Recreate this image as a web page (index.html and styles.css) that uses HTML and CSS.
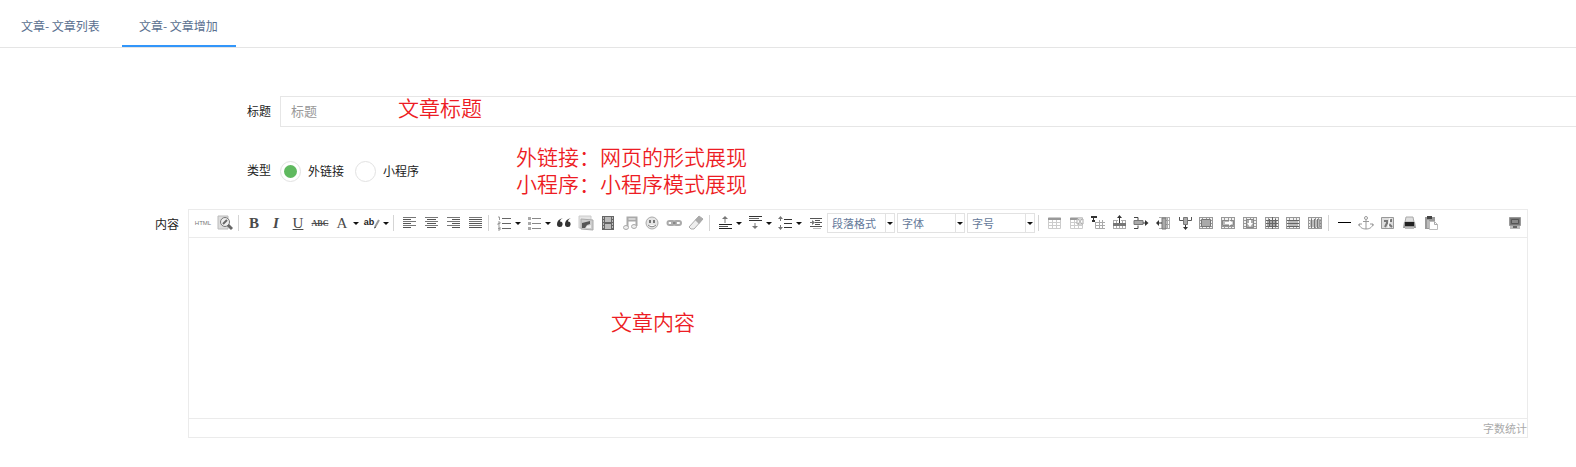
FILE: index.html
```html
<!DOCTYPE html>
<html lang="zh-CN">
<head>
    <meta charset="UTF-8">
    <title>文章增加</title>
    <link rel="stylesheet" href="styles.css">
</head>
<body>
    <!-- Shared icon shapes -->
    <svg class="defs" aria-hidden="true">
        <symbol id="grid" viewBox="0 0 16 16">
            <path d="M1 2h14v12H1z" fill="#f2f2f2"/>
            <path d="M1 2.5h14M1 5.5h14M1 8.5h14M1 11.5h14M1 13.5h14M1.5 2v12M4.5 2v12M8.5 2v12M11.5 2v12M14.5 2v12" stroke="#999" fill="none"/>
        </symbol>
        <symbol id="caret" viewBox="0 0 8 16">
            <path d="M1 7h6L4 10z" fill="#111"/>
        </symbol>
    </svg>

    <!-- Tabs -->
    <nav class="tabs">
        <a class="tab" href="#list">文章- 文章列表</a>
        <a class="tab active" href="#add">文章- 文章增加</a>
    </nav>

    <form class="form">
        <!-- Title -->
        <div class="row">
            <label class="label" for="title">标题</label>
            <input class="input" type="text" id="title" placeholder="标题">
            <span class="note note-title">文章标题</span>
        </div>

        <!-- Type -->
        <div class="row row-type">
            <span class="label" id="typeLabel">类型</span>
            <div class="radios" role="radiogroup" aria-labelledby="typeLabel">
                <label class="radio"><input type="radio" name="type" checked>外链接</label>
                <label class="radio"><input type="radio" name="type">小程序</label>
            </div>
            <span class="note note-type">外链接：网页的形式展现<br>小程序：小程序模式展现</span>
        </div>

        <!-- Content -->
        <div class="row row-content">
            <label class="label label-content" for="content">内容</label>
            <div class="editor">
                <div class="toolbar">
                    <button type="button" class="btn html">HTML</button>
                    <button type="button" class="btn" aria-label="预览"><svg viewBox="0 0 16 16"><path d="M1 1h10v13H1z" fill="#ddd" stroke="#bbb"/><circle cx="8" cy="7" r="4.5" fill="#eee" stroke="#777"/><path d="M6 9l4-4" stroke="#666" stroke-width="2"/><path d="M11 10l4 4" stroke="#666" stroke-width="3"/></svg></button>
                    <span class="sep"></span>
                    <button type="button" class="btn serif bold">B</button>
                    <button type="button" class="btn serif bold italic">I</button>
                    <button type="button" class="btn serif under">U</button>
                    <button type="button" class="btn strike">ABC</button>
                    <button type="button" class="btn drop serif"><span class="face">A</span><svg class="caret"><use href="#caret"/></svg></button>
                    <button type="button" class="btn drop pen"><span class="face">ab<svg class="nib" viewBox="0 0 6 12"><path d="M1 10L5 3" stroke="#999" stroke-width="2"/><path d="M0 11l2-1" stroke="#444"/></svg></span><svg class="caret"><use href="#caret"/></svg></button>
                    <span class="sep"></span>
                    <button type="button" class="btn" aria-label="居左对齐"><svg viewBox="0 0 16 16"><path d="M2 2.5h13M2 6.5h13M2 10.5h13" stroke="#777"/><path d="M2 4.5h8M2 8.5h8M2 12.5h8" stroke="#555"/></svg></button>
                    <button type="button" class="btn" aria-label="居中对齐"><svg viewBox="0 0 16 16"><path d="M2 2.5h13M2 6.5h13M2 10.5h13" stroke="#777"/><path d="M4 4.5h9M4 8.5h9M4 12.5h9" stroke="#555"/></svg></button>
                    <button type="button" class="btn" aria-label="居右对齐"><svg viewBox="0 0 16 16"><path d="M2 2.5h13M2 6.5h13M2 10.5h13" stroke="#777"/><path d="M7 4.5h8M7 8.5h8M7 12.5h8" stroke="#555"/></svg></button>
                    <button type="button" class="btn" aria-label="两端对齐"><svg viewBox="0 0 16 16"><path d="M2 2.5h13M2 6.5h13M2 10.5h13" stroke="#777"/><path d="M2 4.5h13M2 8.5h13M2 12.5h13" stroke="#555"/></svg></button>
                    <span class="sep"></span>
                    <button type="button" class="btn drop" aria-label="有序列表"><svg viewBox="0 0 16 16"><path d="M6 3.5h9M6 8.5h9M6 13.5h9" stroke="#666"/><path d="M2 2h1.500v3M2 7h2v1.500H2V10h2M2 12h2v3H2M2 13.500h2" stroke="#999" fill="none"/></svg><svg class="caret"><use href="#caret"/></svg></button>
                    <button type="button" class="btn drop" aria-label="无序列表"><svg viewBox="0 0 16 16"><path d="M6 3.5h9M6 8.5h9M6 13.5h9" stroke="#888"/><path d="M2 2h3v3H2zM2 7h3v3H2zM2 12h3v3H2z" fill="#aaa"/></svg><svg class="caret"><use href="#caret"/></svg></button>
                    <button type="button" class="btn" aria-label="引用"><svg viewBox="0 0 16 16"><path d="M7 3C3 4 1 6 1 9a2.800 2.800 0 1 0 3-2.600C4 5 5 4 7 3zM15 3c-4 1-6 3-6 6a2.800 2.800 0 1 0 3-2.600C12 5 13 4 15 3z" fill="#333"/></svg></button>
                    <button type="button" class="btn" aria-label="图片"><svg viewBox="0 0 16 16"><path d="M1 1h12v12H1z" fill="#e5e5e5" stroke="#ccc"/><path d="M3 4l12 1v10L3 14z" fill="#ccc" stroke="#aaa"/><path d="M4 8l8-2v3l-3 1-2 3H4z" fill="#555"/><path d="M9 11l4-1v3H8z" fill="#eee"/></svg></button>
                    <button type="button" class="btn" aria-label="视频"><svg viewBox="0 0 16 16"><path d="M2 1h12v14H2z" fill="#666"/><path d="M5 2h6v5H5zM5 9h6v5H5z" fill="#bbb"/><path d="M3.500 2v12M12.500 2v12" stroke="#bbb" stroke-dasharray="2 1"/></svg></button>
                    <button type="button" class="btn" aria-label="音乐"><svg viewBox="0 0 16 16" fill="none" stroke="#aaa"><path d="M5.500 12V2.500h9V11M5.500 5.500h9" stroke-width="2"/><ellipse cx="4" cy="12.500" rx="2.500" ry="2" fill="#eee"/><ellipse cx="12" cy="11.500" rx="2.500" ry="2" fill="#eee"/></svg></button>
                    <button type="button" class="btn" aria-label="表情"><svg viewBox="0 0 16 16"><circle cx="8" cy="8" r="6" fill="#e5e5e5" stroke="#aaa"/><path d="M6 5v3M10 5v3" stroke="#777" stroke-width="2"/><path d="M4 10q4 3.500 8 0" fill="#fff" stroke="#888"/></svg></button>
                    <button type="button" class="btn" aria-label="超链接"><svg viewBox="0 0 16 16" fill="none" stroke="#aaa" stroke-width="2"><rect x="1.500" y="6" width="7" height="4" rx="2"/><rect x="8" y="6" width="7" height="4" rx="2"/><path d="M5 8h6" stroke="#666" stroke-width="1"/></svg></button>
                    <button type="button" class="btn" aria-label="清除格式"><svg viewBox="0 0 16 16"><path d="M1 12l10-11 4 3-9 10H3z" fill="#eee" stroke="#aaa"/><path d="M7 5l4-4 4 3-4 5z" fill="#aaa"/></svg></button>
                    <span class="sep"></span>
                    <button type="button" class="btn drop" aria-label="段前距"><svg viewBox="0 0 16 16"><path d="M2 9.500h13M2 13.500h13" stroke="#222"/><path d="M2 11.500h9" stroke="#555"/><path d="M8 8V3" stroke="#777"/><path d="M5 4l3-3 3 3z" fill="#777"/></svg><svg class="caret"><use href="#caret"/></svg></button>
                    <button type="button" class="btn drop" aria-label="段后距"><svg viewBox="0 0 16 16"><path d="M2 1.500h13M2 5.500h13" stroke="#333"/><path d="M2 3.500h10" stroke="#666"/><path d="M8 8v5" stroke="#777"/><path d="M5 11l3 3 3-3z" fill="#777"/></svg><svg class="caret"><use href="#caret"/></svg></button>
                    <button type="button" class="btn drop" aria-label="行间距"><svg viewBox="0 0 16 16"><path d="M7 4.500h8M7 8.500h8M7 12.500h8" stroke="#333"/><path d="M3.500 2v4M3.500 10v4" stroke="#777"/><path d="M1 4l2.500-3L6 4zM1 12l2.500 3L6 12z" fill="#777"/></svg><svg class="caret"><use href="#caret"/></svg></button>
                    <button type="button" class="btn" aria-label="首行缩进"><svg viewBox="0 0 16 16"><path d="M3 3.500h12M8 5.500h5M8 7.500h7M8 9.500h5M3 11.500h12" stroke="#555"/><path d="M3 7h2V5l3 2.500L5 10V8H3z" fill="#777"/><path d="M6 13.500h8" stroke="#bbb"/></svg></button>
                    <span class="combo"><select aria-label="段落格式"><option>段落格式</option></select><svg class="caret"><use href="#caret"/></svg></span>
                    <span class="combo"><select aria-label="字体"><option>字体</option></select><svg class="caret"><use href="#caret"/></svg></span>
                    <span class="combo"><select aria-label="字号"><option>字号</option></select><svg class="caret"><use href="#caret"/></svg></span>
                    <span class="sep"></span>
                    <div class="tables">
                        <button type="button" class="btn" aria-label="插入表格"><svg viewBox="0 0 16 16"><path d="M2.500 2.500h12v11h-12zM2.500 7.500h12M2.500 10.500h12M6.500 4v9M10.500 4v9" fill="none" stroke="#ccc"/><path d="M2 3h13v2H2z" fill="#999"/></svg></button>
                        <button type="button" class="btn" aria-label="删除表格"><svg viewBox="0 0 16 16"><path d="M2.500 2.500h12v11h-12zM2.500 7.500h12M2.500 10.500h12M6.500 4v9M10.500 4v9" fill="none" stroke="#ccc"/><path d="M2 3h8v2H2z" fill="#999"/><path d="M9 4h6v5H9z" fill="#fff" stroke="#aaa"/><path d="M10 4l4 5M14 4l-4 5" stroke="#aaa"/></svg></button>
                        <button type="button" class="btn" aria-label="表格前插入段落"><svg viewBox="0 0 16 16"><path d="M1 2h6M2 6h3" stroke="#333" stroke-width="2"/><path d="M3.500 2v4" stroke="#333"/><path d="M5.500 7v6.500H15M5.500 7.500H15M5.500 10.500H15M9.500 5v9M12.500 5v9" fill="none" stroke="#aaa"/></svg></button>
                        <button type="button" class="btn" aria-label="前插入行"><svg viewBox="0 0 16 16"><path d="M2.500 5v9M5.500 5v9M11.500 5v9M14.500 5v9M2 5.500h5M10 5.500h5M2 13.500h13M8.500 11v3" stroke="#aaa"/><path d="M2 8h13v3H2z" fill="#777"/><path d="M8.500 8V1" stroke="#333"/><path d="M6 3l2.500-3L11 3z" fill="#333"/></svg></button>
                        <button type="button" class="btn" aria-label="删除行"><svg viewBox="0 0 16 16"><path d="M1 2.500h4v3M1 13.500h4v-3" fill="none" stroke="#444"/><path d="M1 5.500h9v4H1z" fill="#aaa" stroke="#777"/><path d="M10 8h4" stroke="#333"/><path d="M12 5l3.500 3-3.500 3z" fill="#333"/></svg></button>
                        <button type="button" class="btn" aria-label="前插入列"><svg viewBox="0 0 16 16"><path d="M4 2.500h11M4 13.500h11M11 5.500h4M11 9.500h4M12.500 2v12M14.500 2v12" stroke="#aaa"/><path d="M7 3h4v11H7z" fill="#aaa" stroke="#777"/><path d="M2 8h5" stroke="#333"/><path d="M4 5L1 8l3 3z" fill="#333"/></svg></button>
                        <button type="button" class="btn" aria-label="删除列"><svg viewBox="0 0 16 16"><path d="M2.500 2v3.500H6M14.500 2v3.500H11" fill="none" stroke="#555"/><path d="M6.500 2.500h4v7h-4z" fill="#aaa" stroke="#777"/><path d="M8.500 10v4" stroke="#333"/><path d="M6 12l2.500 3 2.500-3z" fill="#333"/></svg></button>
                        <button type="button" class="btn" aria-label="合并单元格"><svg viewBox="0 0 16 16"><use href="#grid"/><path d="M3.500 4.500h9v7h-9z" fill="#aaa" stroke="#777"/></svg></button>
                        <button type="button" class="btn" aria-label="右合并单元格"><svg viewBox="0 0 16 16"><use href="#grid"/><path d="M2.500 5.500h11v5h-11z" fill="#bbb" stroke="#888"/><path d="M5 8h5" stroke="#fff" stroke-width="2"/><path d="M9 5l4 3-4 3z" fill="#fff"/></svg></button>
                        <button type="button" class="btn" aria-label="下合并单元格"><svg viewBox="0 0 16 16"><use href="#grid"/><path d="M4.500 4.500h7v8h-7z" fill="#aaa" stroke="#888"/><path d="M8 5v4" stroke="#fff" stroke-width="2"/><path d="M5 8l3 4 3-4z" fill="#fff"/></svg></button>
                        <button type="button" class="btn" aria-label="完全拆分单元格"><svg viewBox="0 0 16 16"><use href="#grid"/><path d="M3 5h10v7H3z" fill="#aaa"/><path d="M2 5.500h12M2 8.500h12M2 11.500h12M5.500 4v8M8.500 2v12M11.500 4v8" stroke="#666"/></svg></button>
                        <button type="button" class="btn" aria-label="拆分成行"><svg viewBox="0 0 16 16"><use href="#grid"/><path d="M3 5h10v7H3z" fill="#bbb"/><path d="M2 5.500h12M2 8.500h12M2 11.500h12" stroke="#666"/></svg></button>
                        <button type="button" class="btn" aria-label="拆分成列"><svg viewBox="0 0 16 16"><use href="#grid"/><path d="M3 5h10v7H3z" fill="#bbb"/><path d="M4.500 4v9M7.500 4v9M10.500 4v9M13 4v9" stroke="#777"/></svg></button>
                    </div>
                    <span class="sep"></span>
                    <button type="button" class="btn" aria-label="分隔线"><svg viewBox="0 0 16 16"><path d="M2 7.500h13" stroke="#000" stroke-width="1"/></svg></button>
                    <button type="button" class="btn" aria-label="锚点"><svg viewBox="0 0 16 16" fill="none" stroke="#999"><circle cx="8" cy="3" r="1.500"/><path d="M8 5v9M5 6.500h6M1 9c1 4 4 5 7 5s6-1 7-5M1 11V9h3M15 11V9h-3"/></svg></button>
                    <button type="button" class="btn" aria-label="地图"><svg viewBox="0 0 16 16"><path d="M1.500 2.500h12v11h-12z" fill="#ddd" stroke="#999"/><path d="M4 6h3v3M5 12l2-4M11 4v3M9 9l3 3" fill="none" stroke="#777" stroke-width="2"/><path d="M10 3l-2 10" stroke="#fff"/></svg></button>
                    <button type="button" class="btn" aria-label="打印"><svg viewBox="0 0 16 16"><path d="M4 2h7l1 5H3z" fill="#ddd" stroke="#aaa"/><path d="M2 7h11l1 6H1z" fill="#999"/><path d="M3 7h9v4H3z" fill="#222"/><path d="M3 12h9v2H3z" fill="#bbb"/></svg></button>
                    <button type="button" class="btn" aria-label="粘贴"><svg viewBox="0 0 16 16"><path d="M1 2h10v12H1z" fill="#999"/><path d="M3 1h5v3H3z" fill="#444"/><path d="M3 5h2v8H3z" fill="#bbb"/><path d="M5.500 6.500h5l3 3v5h-8z" fill="#fff" stroke="#bbb"/><path d="M10.500 6.500v3h3" fill="none" stroke="#aaa"/></svg></button>
                    <button type="button" class="btn full" aria-label="全屏"><svg viewBox="0 0 16 16"><path d="M2.500 2.500h11v8h-11z" fill="#777" stroke="#999"/><path d="M4.500 4.500h7v4h-7z" fill="#888" stroke="#555"/><path d="M3 11h10v3H3z" fill="#bbb"/><path d="M6 11h4v2H6z" fill="#666"/></svg></button>
                </div>
                <div class="body">
                    <textarea id="content"></textarea>
                    <span class="note note-content">文章内容</span>
                </div>
                <div class="status">字数统计</div>
            </div>
        </div>
    </form>
</body>
</html>
```

FILE: styles.css
```css
* {
    box-sizing: border-box;
}

body {
    margin: 0;
    background: #fff;
    color: #222;
    font-family: "Noto Sans CJK SC", sans-serif;
    font-size: 12px;
    line-height: 20px;
    overflow-x: hidden;
}

.defs {
    position: absolute;
    width: 0;
    height: 0;
}

/* tabs */
.tabs {
    display: flex;
    gap: 4px;
    height: 48px;
    padding: 0 4px;
    border-bottom: 1px solid #e5e5e5;
}

.tab {
    min-width: 114px;
    padding: 16px 17px 9px;
    border-bottom: 2px solid transparent;
    color: #5a6f8f;
    text-decoration: none;
}

.tab.active {
    border-bottom-color: #3296fa;
}

/* form */
.form {
    padding-top: 48px;
}

.row {
    display: flex;
    position: relative;
    align-items: center;
    gap: 9px;
}

.label {
    width: 271px;
    padding-bottom: 2px;
    text-align: right;
}

.input {
    flex: 1;
    height: 31px;
    padding: 0 10px 2px;
    border: 1px solid #e6e6e6;
    border-right: none;
    font: 13px "Noto Sans CJK SC", sans-serif;
}

.input::placeholder {
    color: #999;
}

.row-type {
    margin-top: 33px;
}

.radios {
    display: flex;
    gap: 11px;
}

.radio {
    display: flex;
    align-items: center;
    gap: 7px;
    height: 22px;
    line-height: 18px;
}

.radio input {
    appearance: none;
    width: 21px;
    height: 21px;
    margin: 0;
    padding: 3px;
    border: 1px solid #e2e2e2;
    border-radius: 50%;
}

.radio input:checked {
    background: #5fb95f content-box;
}

.row-content {
    align-items: flex-start;
    margin-top: 27px;
    padding-right: 48px;
}

.label-content {
    width: 179px;
    padding-top: 5px;
}

/* red notes over the form */
.note {
    position: absolute;
    color: #ed1c24;
    font-size: 21px;
    font-weight: 350;
    line-height: 27px;
    white-space: nowrap;
    pointer-events: none;
}

.note-title {
    top: -2px;
    left: 398px;
}

.note-type {
    top: -17px;
    left: 516px;
}

.note-content {
    top: 70px;
    left: 422px;
}

/* editor */
.editor {
    flex: 1;
    border: 1px solid #ebebeb;
}

.toolbar {
    display: flex;
    align-items: center;
    gap: 2px;
    height: 28px;
    padding: 0 2px 1px 4px;
    border-bottom: 1px solid #ebebeb;
}

.btn {
    display: flex;
    flex: none;
    align-items: center;
    justify-content: center;
    width: 20px;
    height: 20px;
    padding: 0;
    border: none;
    background: none;
    color: #4a4a4a;
    cursor: pointer;
}

.btn:hover {
    background: #eef4fb;
}

.btn svg {
    flex: none;
    width: 16px;
    height: 16px;
}

.btn.drop {
    width: 28px;
    padding-left: 2px;
    gap: 2px;
}

.btn svg.caret,
.caret {
    width: 8px;
    height: 16px;
}

.face {
    display: flex;
    justify-content: center;
    width: 16px;
}

.html {
    color: #777;
    font: 6px "Liberation Sans", sans-serif;
}

.serif {
    font: 15px "Liberation Serif", serif;
}

.bold {
    font-weight: bold;
}

.italic {
    font-style: italic;
}

.under {
    text-decoration: underline;
}

.strike {
    font: bold 8px "Liberation Serif", serif;
    text-decoration: line-through;
}

.pen {
    color: #222;
    font: bold 9px "Liberation Sans", sans-serif;
}

.btn svg.nib {
    width: 6px;
    height: 12px;
}

.sep {
    width: 1px;
    height: 16px;
    margin: 0 3px 0 1px;
    background: #d5d5d5;
}

.combo {
    display: flex;
    flex: none;
    align-items: center;
    width: 68px;
    height: 20px;
    border: 1px solid #e2e2e2;
}

.combo select {
    appearance: none;
    flex: 1;
    min-width: 0;
    height: 18px;
    padding: 0 0 0 4px;
    border: none;
    border-right: 1px solid #e2e2e2;
    border-radius: 0;
    background: none;
    color: #64799a;
    font: 11px "Noto Sans CJK SC", sans-serif;
}

.tables {
    display: flex;
    justify-content: space-between;
    width: 281px;
}

.full {
    margin-left: auto;
}

.body {
    position: relative;
}

.body textarea {
    display: block;
    width: 100%;
    height: 180px;
    padding: 8px;
    border: none;
    outline: none;
    resize: none;
    font: 16px "Noto Sans CJK SC", sans-serif;
}

.status {
    height: 19px;
    border-top: 1px solid #ebebeb;
    color: #aaa;
    font-size: 11px;
    line-height: 18px;
    text-align: right;
}
```
